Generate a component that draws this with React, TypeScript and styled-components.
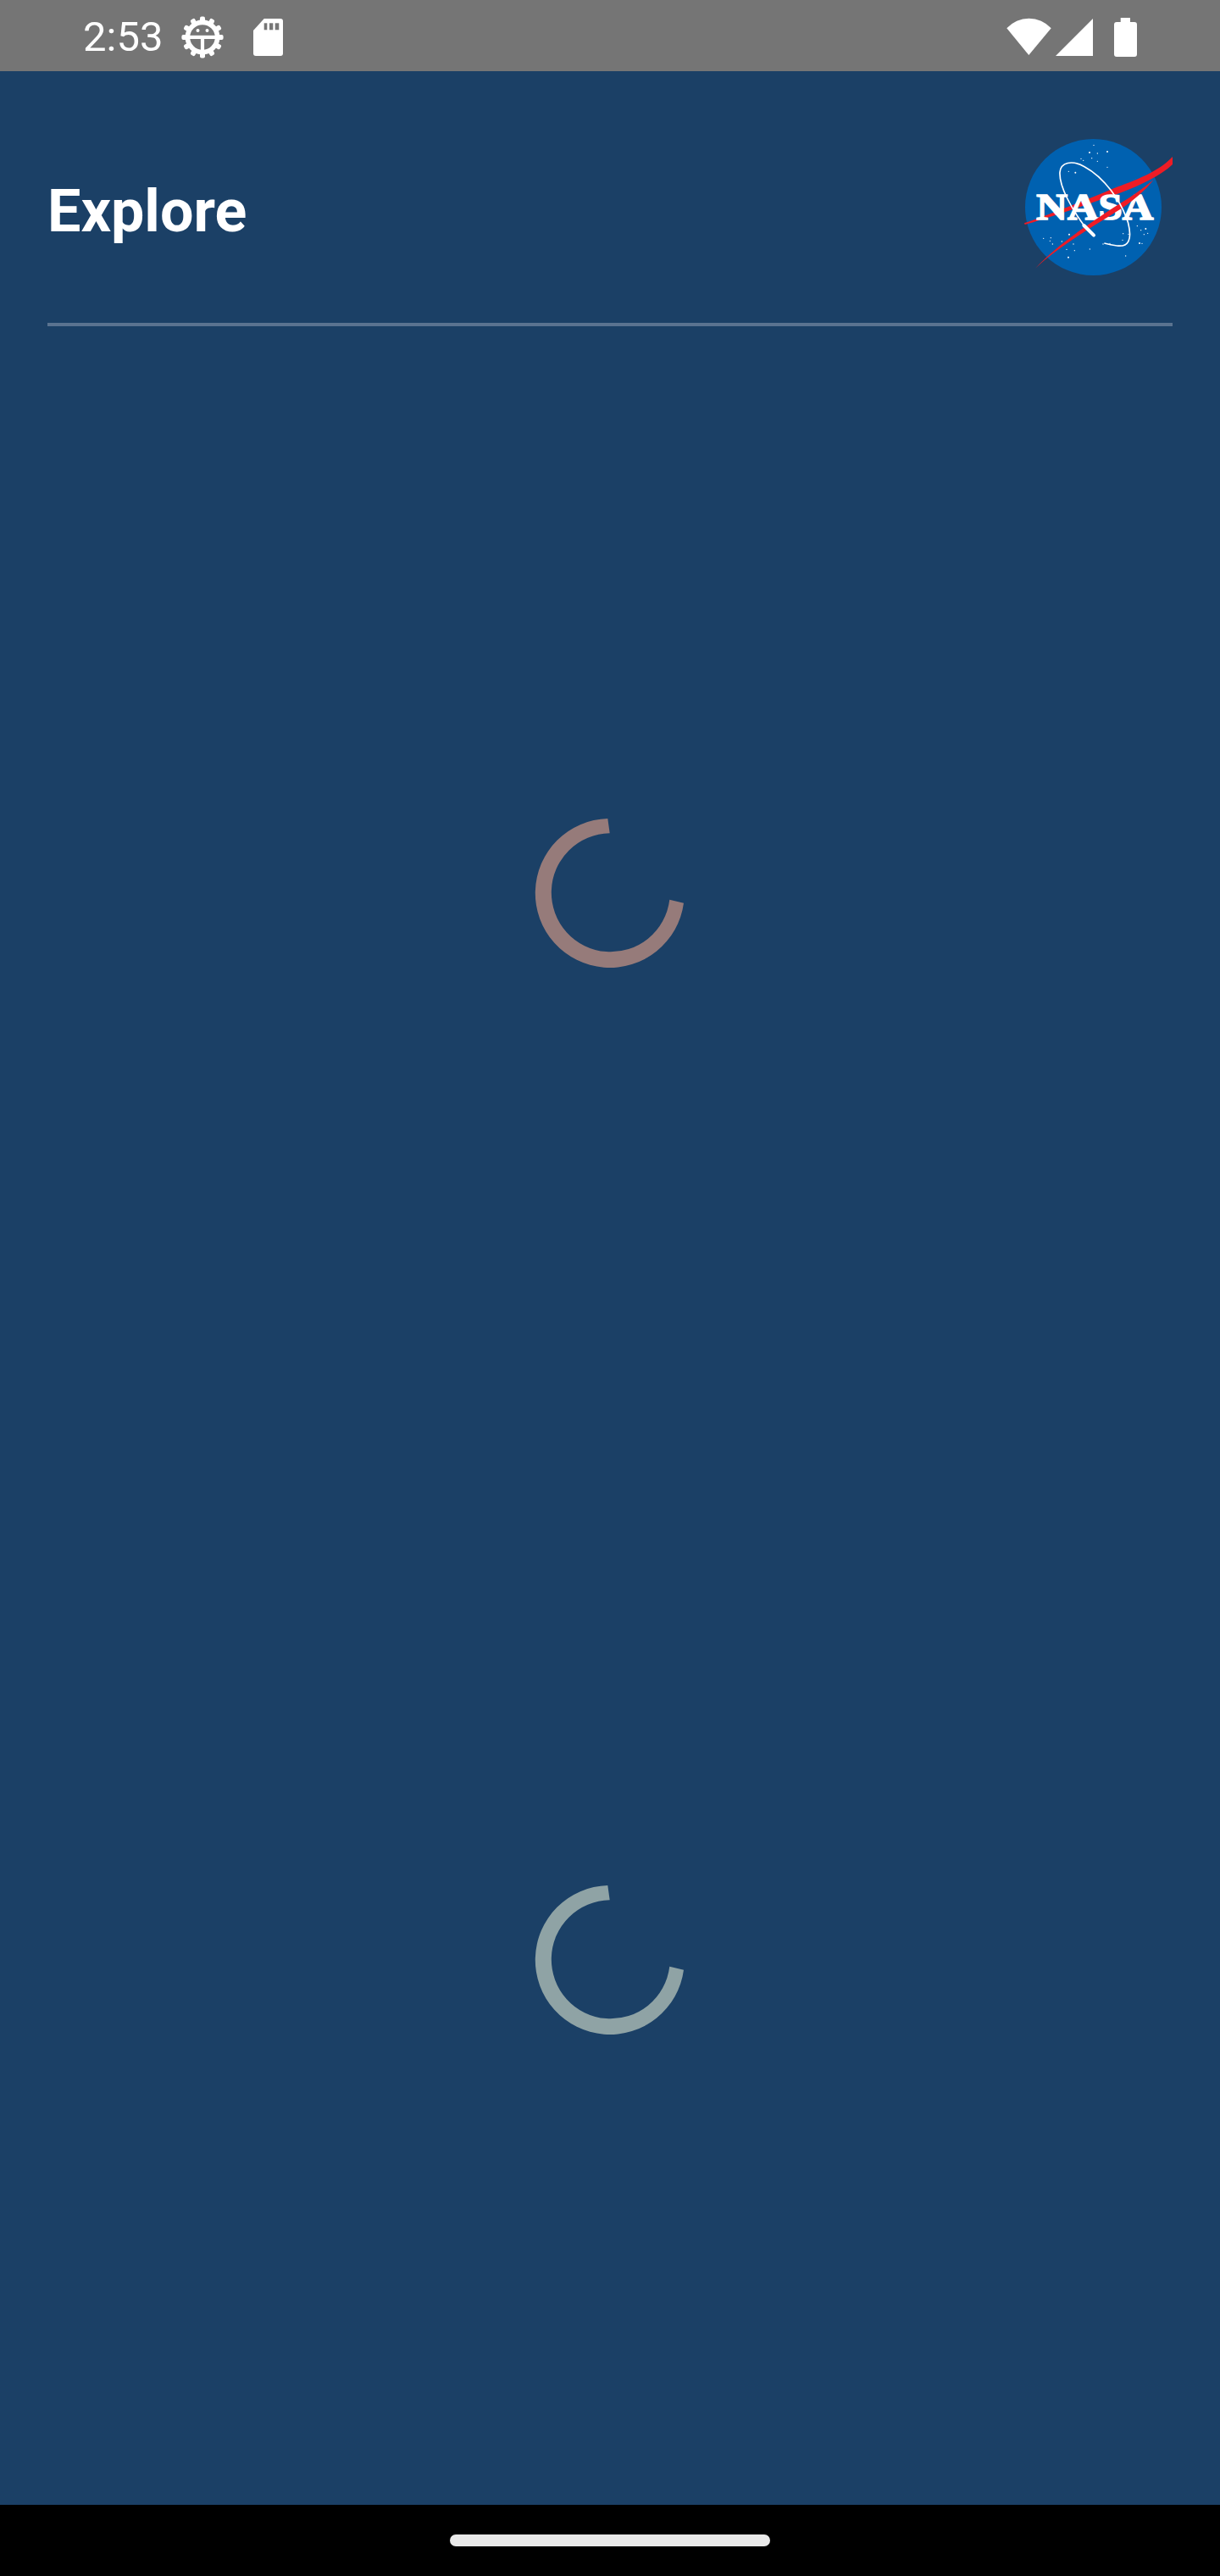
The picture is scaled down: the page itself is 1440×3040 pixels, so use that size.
import styled, { createGlobalStyle } from 'styled-components';

const GlobalStyle = createGlobalStyle`
  html, body {
    margin: 0;
    padding: 0;
    background: #1b4066;
  }
`;

const Page = styled.div`
  display: flex;
  flex-direction: column;
  width: 1440px;
  height: 3040px;
  overflow: hidden;
  background: #1b4066;
  font-family: Roboto, "Liberation Sans", sans-serif;
  color: #fff;
`;

const StatusBar = styled.div`
  display: flex;
  flex: none;
  align-items: flex-start;
  justify-content: space-between;
  height: 84px;
  padding: 0 98px 0 98px;
  box-sizing: border-box;
  background: #757575;
`;

const StatusGroup = styled.div`
  display: flex;
  align-items: flex-start;
`;

const Clock = styled.span`
  width: 116px;
  height: 84px;
  font-size: 49px;
  line-height: 88px;
  font-weight: 400;
`;

const StatusIcon = styled.svg<{ $top: number; $left?: number }>`
  display: block;
  flex: none;
  margin-top: ${(props) => props.$top}px;
  margin-left: ${(props) => props.$left ?? 0}px;
`;

const Header = styled.header`
  display: flex;
  flex: none;
  align-items: center;
  justify-content: space-between;
  margin: 0 56px;
  padding: 66px 0 41px;
  border-bottom: 4px solid #5a7390;
`;

const Title = styled.h1`
  margin: 8px 0 0;
  font-size: 70px;
  font-weight: 700;
`;

const Main = styled.main`
  display: flex;
  flex: 1;
  flex-direction: column;
  padding-top: 39px;
`;

const Section = styled.section`
  display: flex;
  align-items: center;
  justify-content: center;
  height: 1259px;
`;

const SpinnerIcon = styled.svg<{ $color: string }>`
  display: block;
  fill: ${(props) => props.$color};
`;

const NavBar = styled.nav`
  display: flex;
  flex: none;
  align-items: flex-start;
  justify-content: center;
  height: 84px;
  padding-top: 35px;
  box-sizing: border-box;
  background: #000;
`;

const NavPill = styled.div`
  width: 378px;
  height: 14px;
  border-radius: 7px;
  background: #e9e9e9;
`;

const TEETH = [0, 30, 60, 90, 120, 150, 180, 210, 240, 270, 300, 330];

const DebugIcon = () => (
  <StatusIcon width="50" height="50" viewBox="0 0 50 50" $top={19}>
    {TEETH.map((angle) => (
      <rect key={angle} x="22" y="0.4" width="6" height="8" rx="2" fill="#fff" transform={`rotate(${angle} 25 25)`} />
    ))}
    <circle cx="25" cy="25" r="17.6" fill="none" stroke="#fff" strokeWidth="5.6" />
    <rect x="8" y="22.8" width="34" height="4.2" fill="#fff" />
    <rect x="22.9" y="24" width="4.2" height="18" fill="#fff" />
    <circle cx="19.5" cy="17" r="2" fill="#fff" />
    <circle cx="30.5" cy="17" r="2" fill="#fff" />
  </StatusIcon>
);

const SdIcon = () => (
  <StatusIcon width="35" height="44" viewBox="0 0 35 44" $top={22} $left={35}>
    <path d="M12.7 0H32a3 3 0 0 1 3 3V41a3 3 0 0 1-3 3H3a3 3 0 0 1-3-3V14Z" fill="#fff" />
    <rect x="12.7" y="5.3" width="3.6" height="8" fill="#757575" />
    <rect x="19" y="5.3" width="4.3" height="8" fill="#757575" />
    <rect x="25.7" y="5.3" width="4.6" height="8" fill="#757575" />
  </StatusIcon>
);

const WifiIcon = () => (
  <StatusIcon width="53" height="44" viewBox="0 0 53 44" $top={21}>
    <path d="M26.3 44L0.3 12.3A35.4 35.4 0 0 1 52.7 12.3Z" fill="#fff" />
  </StatusIcon>
);

const SignalIcon = () => (
  <StatusIcon width="44" height="44" viewBox="0 0 44 44" $top={22} $left={5}>
    <path d="M0 44L44 0V44Z" fill="#fff" />
  </StatusIcon>
);

const BatteryIcon = () => (
  <StatusIcon width="27" height="46" viewBox="0 0 27 46" $top={21} $left={25}>
    <path d="M7.7 0H19V5H24a3 3 0 0 1 3 3V43a3 3 0 0 1-3 3H3a3 3 0 0 1-3-3V8a3 3 0 0 1 3-3H7.7Z" fill="#fff" />
  </StatusIcon>
);

const STARS = [
  [303, 64, 2], [288, 90, 3], [316, 93, 2], [351, 87, 3], [258, 112, 2], [266, 118, 2], [296, 110, 2],
  [316, 121, 2], [351, 142, 2], [214, 157, 2], [238, 161, 3], [457, 350, 2], [487, 360, 3], [470, 365, 2],
  [494, 376, 2], [481, 380, 2], [407, 377, 2], [426, 379, 2], [216, 380, 3], [125, 394, 2], [151, 392, 2],
  [148, 403, 2], [157, 414, 2], [190, 405, 2], [231, 414, 2], [336, 414, 2], [360, 412, 2], [465, 411, 3],
  [474, 412, 2], [207, 433, 2], [235, 437, 2], [289, 432, 2], [213, 461, 3], [416, 456, 2], [405, 400, 2],
];

const NasaLogo = () => (
  <svg width="194" height="190" viewBox="0 0 582 570" style={{ display: 'block' }}>
    <circle cx="301.5" cy="283.5" r="241.5" fill="#0061b0" />
    {STARS.map(([cx, cy, r]) => (
      <circle key={`${cx}-${cy}`} cx={cx} cy={cy} r={r} fill="#fff" />
    ))}
    <path
      d="M57 340C140 312 250 268 370 218C450 188 530 160 582 105V132C540 172 470 205 400 232C280 274 150 320 59 345Z"
      fill="#ee1c25"
    />
    <text
      x="100"
      y="328"
      fontFamily="'Liberation Serif', serif"
      fontWeight="700"
      fontSize="132"
      textLength="414"
      lengthAdjust="spacingAndGlyphs"
      fill="#fff"
      stroke="#fff"
      strokeWidth="5"
    >
      NASA
    </text>
    <path
      d="M96 500C170 420 280 345 400 268C440 244 475 218 515 186C485 225 445 258 405 286C300 352 180 422 96 500Z"
      fill="#ee1c25"
    />
    <path
      d="M270 350C225 290 180 210 183 160C186 125 225 115 270 140C340 178 400 260 425 340C440 400 425 425 385 420C370 418 355 415 340 411"
      fill="none"
      stroke="#fff"
      strokeWidth="5"
    />
    <path d="M268 348L303 383" fill="none" stroke="#fff" strokeWidth="12" strokeLinecap="round" />
  </svg>
);

const Spinner = ({ color }: { color: string }) => (
  <SpinnerIcon $color={color} width="180" height="180" viewBox="0 0 180 180">
    <path d="M87.3 2A88 88 0 1 0 177 101.7L160.3 97.7A70 70 0 1 1 89.7 19.3Z" />
  </SpinnerIcon>
);

const App = () => (
  <Page>
    <GlobalStyle />
    <StatusBar>
      <StatusGroup>
        <Clock>2:53</Clock>
        <DebugIcon />
        <SdIcon />
      </StatusGroup>
      <StatusGroup>
        <WifiIcon />
        <SignalIcon />
        <BatteryIcon />
      </StatusGroup>
    </StatusBar>
    <Header>
      <Title>Explore</Title>
      <NasaLogo />
    </Header>
    <Main>
      <Section>
        <Spinner color="#967b7a" />
      </Section>
      <Section>
        <Spinner color="#8fa3a5" />
      </Section>
    </Main>
    <NavBar>
      <NavPill />
    </NavBar>
  </Page>
);

export default App;
